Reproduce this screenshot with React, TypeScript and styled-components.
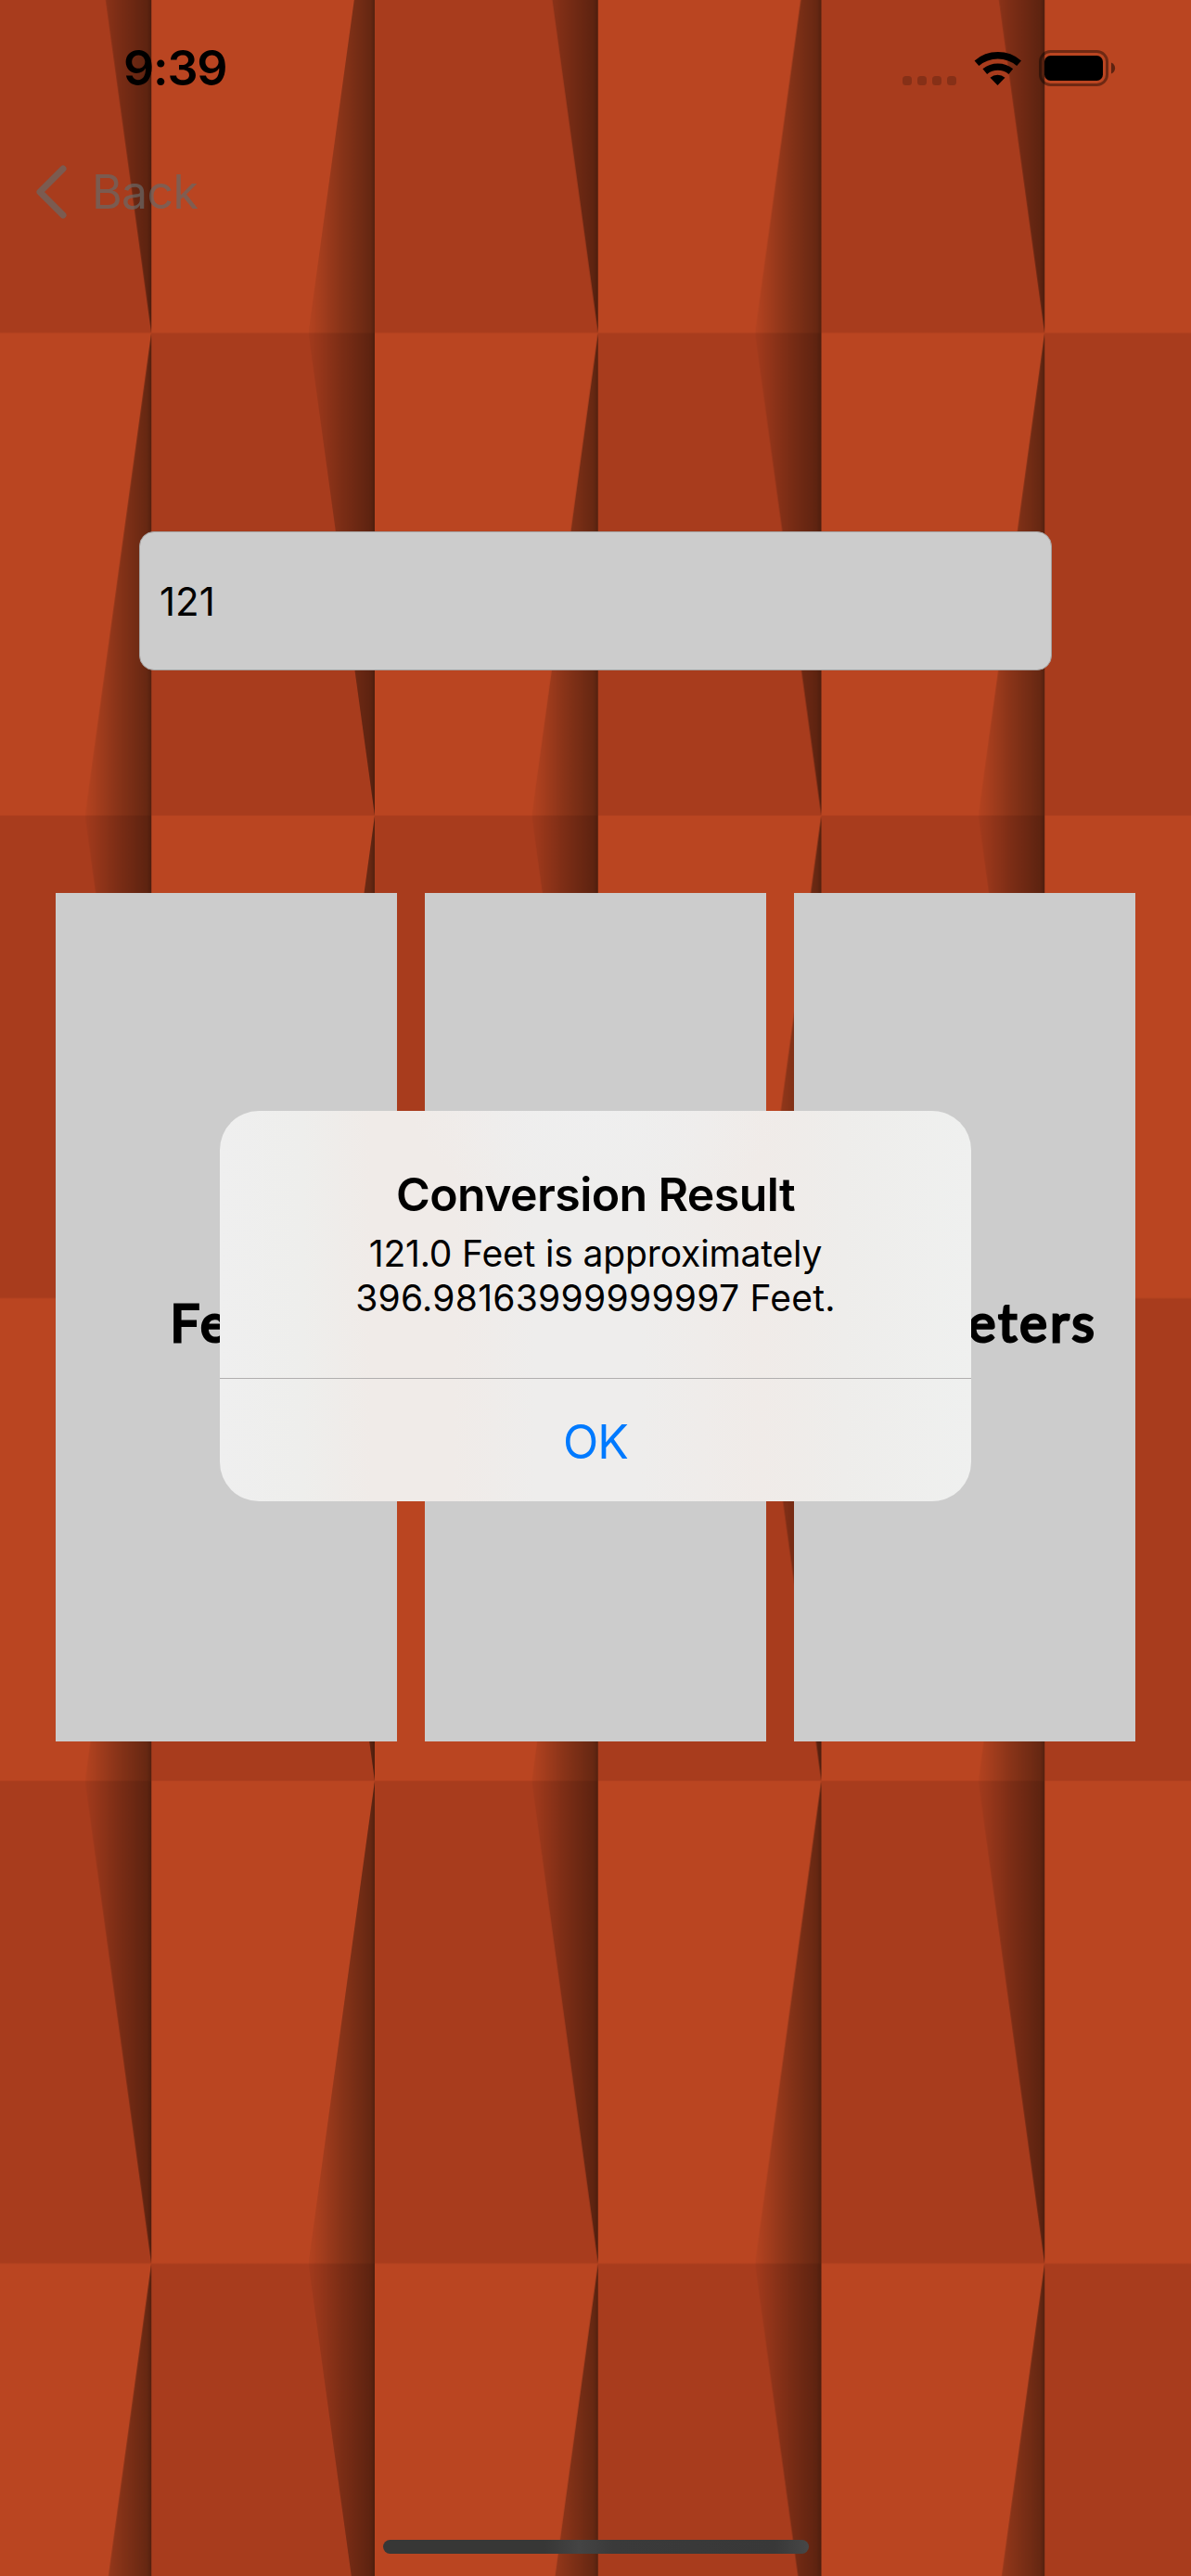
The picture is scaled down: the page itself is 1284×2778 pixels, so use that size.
import React from 'react';
import styled, { createGlobalStyle } from 'styled-components';

const Global = createGlobalStyle`
  html, body { margin: 0; padding: 0; }
  body { font-family: Inter, "Liberation Sans", sans-serif; color: #000; }
  * { box-sizing: border-box; }
`;

const Screen = styled.div`
  position: relative;
  isolation: isolate;
  width: 1284px;
  height: 2778px;
  overflow: hidden;
  display: flex;
  flex-direction: column;
  background: #ba4521;
`;

const Wallpaper = styled.svg`
  position: absolute;
  inset: 0;
  width: 100%;
  height: 100%;
  z-index: -1;
`;

const StatusBar = styled.header`
  display: flex;
  align-items: flex-start;
  justify-content: space-between;
  height: 141px;
  padding: 54px 81px 0 133px;
`;

const Clock = styled.time`
  padding-top: 1px;
  font-size: 52px;
  line-height: 38px;
  font-weight: 600;
  letter-spacing: -1.2px;
`;

const StatusIcons = styled.div`
  display: flex;
  align-items: flex-start;
`;

const NavBar = styled.nav`
  display: flex;
  height: 132px;
  padding: 0 39px;
`;

const BackButton = styled.button`
  display: flex;
  align-items: center;
  gap: 27px;
  height: 132px;
  padding: 0;
  border: 0;
  background: none;
  font: 400 50px/60px Inter, sans-serif;
  letter-spacing: -0.6px;
  color: rgba(104, 104, 103, 0.7);
`;

const ValueField = styled.input`
  width: 984px;
  height: 150px;
  margin: 300px auto 0;
  padding: 0 21px;
  border: 1px solid #a5a09f;
  border-radius: 16px;
  background: #ccc;
  font: 400 42px Inter, sans-serif;
  color: #000;
  outline: 0;
`;

const UnitRow = styled.main`
  display: grid;
  grid-template-columns: repeat(3, 368px);
  gap: 30px;
  height: 915px;
  margin: 240px 60px 0;
`;

const UnitButton = styled.button<{ $align?: string }>`
  display: flex;
  align-items: center;
  justify-content: ${p => p.$align ?? 'center'};
  padding: 10px 41px 0;
  border: 0;
  background: #ccc;
  font: 400 56px Lato, sans-serif;
  letter-spacing: 3.2px;
  -webkit-text-stroke: 3px #000;
  stroke-linejoin: round;
  color: #000;
`;

const Alert = styled.section`
  position: absolute;
  left: 237px;
  top: 1198px;
  width: 810px;
  height: 421px;
  display: flex;
  flex-direction: column;
  border-radius: 42px;
  overflow: hidden;
  text-align: center;
  background:
    radial-gradient(ellipse 200px 110px at 50% 0, rgba(239, 239, 239, 0.9), rgba(239, 239, 239, 0)),
    linear-gradient(90deg, #efefef 0, #eeeeec 11%, #f0ebe8 20%, #f0ebe8 31%, #eeedec 42%, #eeedec 56%, #f0ebe8 72%, #eeedeb 83%, #eff0ef 100%);
`;

const AlertBody = styled.div`
  height: 288px;
  padding-top: 57px;
`;

const AlertTitle = styled.h1`
  margin: 0;
  font-size: 50px;
  font-weight: 600;
  line-height: 66px;
  letter-spacing: -0.6px;
`;

const AlertText = styled.p`
  margin: 7px 0 0;
  font-size: 39px;
  line-height: 48px;
`;

const AlertLine = styled.span<{ $tracking: number }>`
  display: block;
  letter-spacing: ${p => p.$tracking}px;
`;

const AlertAction = styled.button`
  flex: 1;
  padding: 3px 0 0;
  border: 0;
  border-top: 1px solid #b0aeae;
  background: none;
  font: 400 50px Inter, sans-serif;
  letter-spacing: -0.8px;
  color: #007aff;
`;

const HomeIndicator = styled.div`
  width: 459px;
  height: 15px;
  margin: auto auto 24px 413px;
  border-radius: 8px;
  background: linear-gradient(90deg, #373736 0 38%, #444 46%, #3a3a3a 54%, #383838 92%, #474747 100%);
`;

const CELL_W = 240.75;
const CELL_H = 520.5;

// Two-by-two folded panels, each column casting a tapered shadow on its left neighbour.
function FoldedPaper() {
  const w = CELL_W;
  const h = CELL_H;
  return (
    <Wallpaper viewBox="0 0 1284 2778" aria-hidden="true">
      <defs>
        <linearGradient id="fold" x1="0" x2="1">
          <stop offset="0" stopColor="#1c0d05" stopOpacity="0.04" />
          <stop offset="0.15" stopColor="#1c0d05" stopOpacity="0.12" />
          <stop offset="0.5" stopColor="#1c0d05" stopOpacity="0.32" />
          <stop offset="0.93" stopColor="#1c0d05" stopOpacity="0.53" />
          <stop offset="1" stopColor="#1c0d05" stopOpacity="0.65" />
        </linearGradient>
        <pattern id="paper" patternUnits="userSpaceOnUse" x={163.25 - w} y={359 - h} width={w * 2} height={h * 2}>
          <rect width={w * 2} height={h * 2} fill="#ba4521" />
          <rect width={w} height={h} fill="#a83c1d" />
          <rect x={w} y={h} width={w} height={h} fill="#a83c1d" />
          <clipPath id="left"><path d={`M${w} ${h}L${w - 71.5} 0H${w}ZM${w} ${h}L${w - 71.5} ${2 * h}H${w}Z`} /></clipPath>
          <clipPath id="right"><path d={`M${2 * w} 0L${2 * w - 71.5} ${h}L${2 * w} ${2 * h}Z`} /></clipPath>
          <rect x={w - 71.5} width="71.5" height={2 * h} fill="url(#fold)" clipPath="url(#left)" />
          <rect x={2 * w - 71.5} width="71.5" height={2 * h} fill="url(#fold)" clipPath="url(#right)" />
        </pattern>
      </defs>
      <rect width="1284" height="2778" fill="url(#paper)" />
    </Wallpaper>
  );
}

function StatusGlyphs() {
  return (
    <StatusIcons>
      <svg width="231" height="40" viewBox="972 53 231 40" fill="none">
        <g fill="#000" fillOpacity="0.2">
          {[973, 989, 1005, 1021].map(x => <rect key={x} x={x} y="81" width="10" height="10" rx="3.5" />)}
        </g>
        <g stroke="#000" strokeWidth="7.4">
          <path d="M1053 67.2a35 35 0 0 1 45.6 0" />
          <path d="M1061.8 76.2a22 22 0 0 1 28 0" />
        </g>
        <path fill="#000" d="M1075.5 91l-8-8.200a12 12 0 0 1 16 0z" />
        <rect x="1121.500" y="54.500" width="72" height="36" rx="11" stroke="#000" strokeOpacity="0.4" strokeWidth="3" />
        <rect x="1126" y="59" width="63" height="27" rx="6.500" fill="#000" />
        <path fill="#000" fillOpacity="0.5" d="M1198 66.500c5.500 2 5.500 10 0 12z" />
      </svg>
    </StatusIcons>
  );
}

export default function App() {
  return (
    <>
      <Global />
      <Screen>
        <FoldedPaper />
        <StatusBar>
          <Clock>9:39</Clock>
          <StatusGlyphs />
        </StatusBar>
        <NavBar>
          <BackButton>
            <svg width="33" height="58" viewBox="0 0 33 58" fill="none" stroke="currentColor" strokeWidth="7" strokeLinecap="round" strokeLinejoin="round">
              <path d="M29 4 4 29l25 25" />
            </svg>
            Back
          </BackButton>
        </NavBar>
        <ValueField defaultValue="121" />
        <UnitRow>
          <UnitButton>Feet</UnitButton>
          <UnitButton />
          <UnitButton $align="flex-end">Meters</UnitButton>
        </UnitRow>
        <HomeIndicator />
        <Alert role="alertdialog">
          <AlertBody>
            <AlertTitle>Conversion Result</AlertTitle>
            <AlertText>
              <AlertLine $tracking={-0.15}>121.0 Feet is approximately</AlertLine>
              <AlertLine $tracking={0.27}>396.98163999999997 Feet.</AlertLine>
            </AlertText>
          </AlertBody>
          <AlertAction>OK</AlertAction>
        </Alert>
      </Screen>
    </>
  );
}
